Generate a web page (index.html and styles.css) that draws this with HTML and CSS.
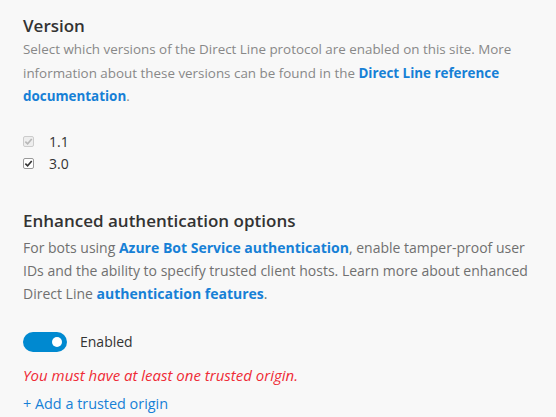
FILE: index.html
```html
<!DOCTYPE html>
<html>
<head>
<meta charset="utf-8">
<link rel="stylesheet" href="styles.css">
</head>
<body>
<div class="page">
  <section class="section">
    <h2 class="title">Version</h2>
    <p class="desc light">Select which versions of the Direct Line protocol are enabled on this site. More information about these versions can be found in the <a class="link strong" href="#">Direct Line reference documentation</a>.</p>
    <div class="checks">
      <label class="check"><span class="box disabled"><svg viewBox="0 0 10 10" width="9" height="9"><path d="M1.5 5.2 L4 7.6 L8.6 2.2" fill="none" stroke="#b8b8b8" stroke-width="1.8"/></svg></span><span>1.1</span></label>
      <label class="check"><span class="box"><svg viewBox="0 0 10 10" width="9" height="9"><path d="M1.5 5.2 L4 7.6 L8.6 2.2" fill="none" stroke="#333" stroke-width="1.8"/></svg></span><span>3.0</span></label>
    </div>
  </section>
  <section class="section second">
    <h2 class="title">Enhanced authentication options</h2>
    <p class="desc dark">For bots using <a class="link strong" href="#">Azure Bot Service authentication</a>, enable tamper-proof user IDs and the ability to specify trusted client hosts. Learn more about enhanced Direct Line <a class="link strong" href="#">authentication features</a>.</p>
    <div class="toggle-row">
      <span class="toggle"><span class="knob"></span></span>
      <span class="toggle-label">Enabled</span>
    </div>
    <p class="error">You must have at least one trusted origin.</p>
    <a class="add" href="#">+ Add a trusted origin</a>
  </section>
</div>
</body>
</html>
```
FILE: styles.css
```css
html, body { margin: 0; padding: 0; }
body {
  background: #f8f8f8;
  font-family: "Open Sans", "Noto Sans", sans-serif;
  width: 556px;
  height: 417px;
  overflow: hidden;
}
.page { padding: 14px 0 0 23px; }
.title {
  margin: 0;
  font-size: 17px;
  font-weight: 600;
  color: #333;
  line-height: 24px;
}
.desc {
  margin: 0;
  font-size: 13.4px;
  line-height: 23.5px;
  width: 533px;
}
.light { color: #888; }
.dark { color: #707070; font-size: 14px; line-height: 23px; width: 522px; }
.link { color: #1680d6; text-decoration: none; }
.strong { font-weight: 700; }
.checks { margin-top: 26px; display: flex; flex-direction: column; gap: 9px; }
.check { display: flex; align-items: center; font-size: 14px; color: #333; line-height: 13px; }
.box {
  width: 11px; height: 11px; border: 1px solid #999; border-radius: 2px;
  background: #fff; display: inline-flex; align-items: center; justify-content: center;
  margin-right: 15px; box-sizing: border-box;
}
.box.disabled { border-color: #ccc; background: #eee; }
.box svg { display: block; }
.second { margin-top: 39px; }
.second .title { margin-bottom: 3px; }
.toggle-row { display: flex; align-items: center; margin-top: 27px; }
.toggle {
  width: 44px; height: 20px; border-radius: 10px; background: #0089d0;
  display: inline-flex; align-items: center; justify-content: flex-end; padding-right: 5px; box-sizing: border-box;
}
.knob { width: 10px; height: 10px; border-radius: 50%; background: #fff; }
.toggle-label { margin-left: 13px; font-size: 14px; color: #333; }
.error { margin: 13px 0 0; font-size: 15px; line-height: 20px; font-style: italic; color: #ef2b36; }
.add { display: inline-block; margin-top: 9px; font-size: 14.4px; color: #1680d6; text-decoration: none; }
```
